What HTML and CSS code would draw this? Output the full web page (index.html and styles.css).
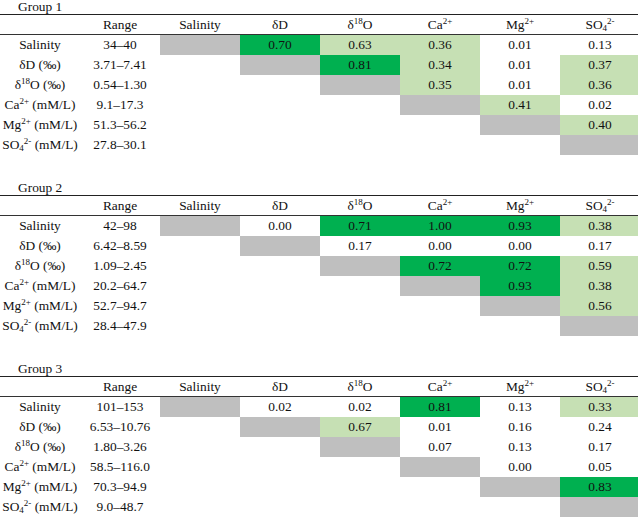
FILE: index.html
```html
<!DOCTYPE html>
<html>
<head>
<meta charset="utf-8">
<link rel="stylesheet" href="styles.css">
</head>
<body>
<div class="page">

<section class="group">
  <div class="title">Group 1</div>
  <div class="tbl">
    <div class="h"></div><div class="h">Range</div><div class="h">Salinity</div><div class="h">δD</div><div class="h">δ<span class="sup">18</span>O</div><div class="h">Ca<span class="sup">2+</span></div><div class="h">Mg<span class="sup">2+</span></div><div class="h">SO<span class="sub">4</span><span class="sup">2-</span></div>

    <div class="c">Salinity</div><div class="c">34–40</div><div class="c g"></div><div class="c d">0.70</div><div class="c l">0.63</div><div class="c l">0.36</div><div class="c">0.01</div><div class="c">0.13</div>
    <div class="c">δD (‰)</div><div class="c">3.71–7.41</div><div class="c"></div><div class="c g"></div><div class="c d">0.81</div><div class="c l">0.34</div><div class="c">0.01</div><div class="c l">0.37</div>
    <div class="c">δ<span class="sup">18</span>O (‰)</div><div class="c">0.54–1.30</div><div class="c"></div><div class="c"></div><div class="c g"></div><div class="c l">0.35</div><div class="c">0.01</div><div class="c l">0.36</div>
    <div class="c">Ca<span class="sup">2+</span> (mM/L)</div><div class="c">9.1–17.3</div><div class="c"></div><div class="c"></div><div class="c"></div><div class="c g"></div><div class="c l">0.41</div><div class="c">0.02</div>
    <div class="c">Mg<span class="sup">2+</span> (mM/L)</div><div class="c">51.3–56.2</div><div class="c"></div><div class="c"></div><div class="c"></div><div class="c"></div><div class="c g"></div><div class="c l">0.40</div>
    <div class="c">SO<span class="sub">4</span><span class="sup">2-</span> (mM/L)</div><div class="c">27.8–30.1</div><div class="c"></div><div class="c"></div><div class="c"></div><div class="c"></div><div class="c"></div><div class="c g"></div>
  </div>
</section>

<section class="group">
  <div class="title">Group 2</div>
  <div class="tbl">
    <div class="h"></div><div class="h">Range</div><div class="h">Salinity</div><div class="h">δD</div><div class="h">δ<span class="sup">18</span>O</div><div class="h">Ca<span class="sup">2+</span></div><div class="h">Mg<span class="sup">2+</span></div><div class="h">SO<span class="sub">4</span><span class="sup">2-</span></div>

    <div class="c">Salinity</div><div class="c">42–98</div><div class="c g"></div><div class="c">0.00</div><div class="c d">0.71</div><div class="c d">1.00</div><div class="c d">0.93</div><div class="c l">0.38</div>
    <div class="c">δD (‰)</div><div class="c">6.42–8.59</div><div class="c"></div><div class="c g"></div><div class="c">0.17</div><div class="c">0.00</div><div class="c">0.00</div><div class="c">0.17</div>
    <div class="c">δ<span class="sup">18</span>O (‰)</div><div class="c">1.09–2.45</div><div class="c"></div><div class="c"></div><div class="c g"></div><div class="c d">0.72</div><div class="c d">0.72</div><div class="c l">0.59</div>
    <div class="c">Ca<span class="sup">2+</span> (mM/L)</div><div class="c">20.2–64.7</div><div class="c"></div><div class="c"></div><div class="c"></div><div class="c g"></div><div class="c d">0.93</div><div class="c l">0.38</div>
    <div class="c">Mg<span class="sup">2+</span> (mM/L)</div><div class="c">52.7–94.7</div><div class="c"></div><div class="c"></div><div class="c"></div><div class="c"></div><div class="c g"></div><div class="c l">0.56</div>
    <div class="c">SO<span class="sub">4</span><span class="sup">2-</span> (mM/L)</div><div class="c">28.4–47.9</div><div class="c"></div><div class="c"></div><div class="c"></div><div class="c"></div><div class="c"></div><div class="c g"></div>
  </div>
</section>

<section class="group">
  <div class="title">Group 3</div>
  <div class="tbl">
    <div class="h"></div><div class="h">Range</div><div class="h">Salinity</div><div class="h">δD</div><div class="h">δ<span class="sup">18</span>O</div><div class="h">Ca<span class="sup">2+</span></div><div class="h">Mg<span class="sup">2+</span></div><div class="h">SO<span class="sub">4</span><span class="sup">2-</span></div>

    <div class="c">Salinity</div><div class="c">101–153</div><div class="c g"></div><div class="c">0.02</div><div class="c">0.02</div><div class="c d">0.81</div><div class="c">0.13</div><div class="c l">0.33</div>
    <div class="c">δD (‰)</div><div class="c">6.53–10.76</div><div class="c"></div><div class="c g"></div><div class="c l">0.67</div><div class="c">0.01</div><div class="c">0.16</div><div class="c">0.24</div>
    <div class="c">δ<span class="sup">18</span>O (‰)</div><div class="c">1.80–3.26</div><div class="c"></div><div class="c"></div><div class="c g"></div><div class="c">0.07</div><div class="c">0.13</div><div class="c">0.17</div>
    <div class="c">Ca<span class="sup">2+</span> (mM/L)</div><div class="c">58.5–116.0</div><div class="c"></div><div class="c"></div><div class="c"></div><div class="c g"></div><div class="c">0.00</div><div class="c">0.05</div>
    <div class="c">Mg<span class="sup">2+</span> (mM/L)</div><div class="c">70.3–94.9</div><div class="c"></div><div class="c"></div><div class="c"></div><div class="c"></div><div class="c g"></div><div class="c d">0.83</div>
    <div class="c">SO<span class="sub">4</span><span class="sup">2-</span> (mM/L)</div><div class="c">9.0–48.7</div><div class="c"></div><div class="c"></div><div class="c"></div><div class="c"></div><div class="c"></div><div class="c g"></div>
  </div>
</section>

</div>
</body>
</html>
```

FILE: styles.css
```css
html, body {
  margin: 0;
  padding: 0;
  background: #fff;
}
body {
  width: 638px;
  height: 518px;
  overflow: hidden;
  font-family: "Liberation Serif", "DejaVu Serif", serif;
  font-size: 13.4px;
  color: #111;
}
.page {
  display: flex;
  flex-direction: column;
  gap: 26px;
}
.title {
  height: 14px;
  line-height: 14px;
  padding-left: 18px;
  white-space: nowrap;
}
.tbl {
  display: grid;
  grid-template-columns: repeat(8, 80px);
  width: 640px;
  border-top: 1px solid #222;
}
.h {
  height: 19px;
  line-height: 20px;
  text-align: center;
  border-bottom: 1px solid #333;
  white-space: nowrap;
}
.c {
  height: 20px;
  line-height: 20px;
  text-align: center;
  white-space: nowrap;
}
.g { background: #bfbfbf; }
.d { background: #00b050; }
.l { background: #c6e0b4; }
.sup {
  font-size: 9px;
  line-height: 0;
  vertical-align: 5px;
}
.sub {
  font-size: 9px;
  line-height: 0;
  vertical-align: -2px;
}
```
